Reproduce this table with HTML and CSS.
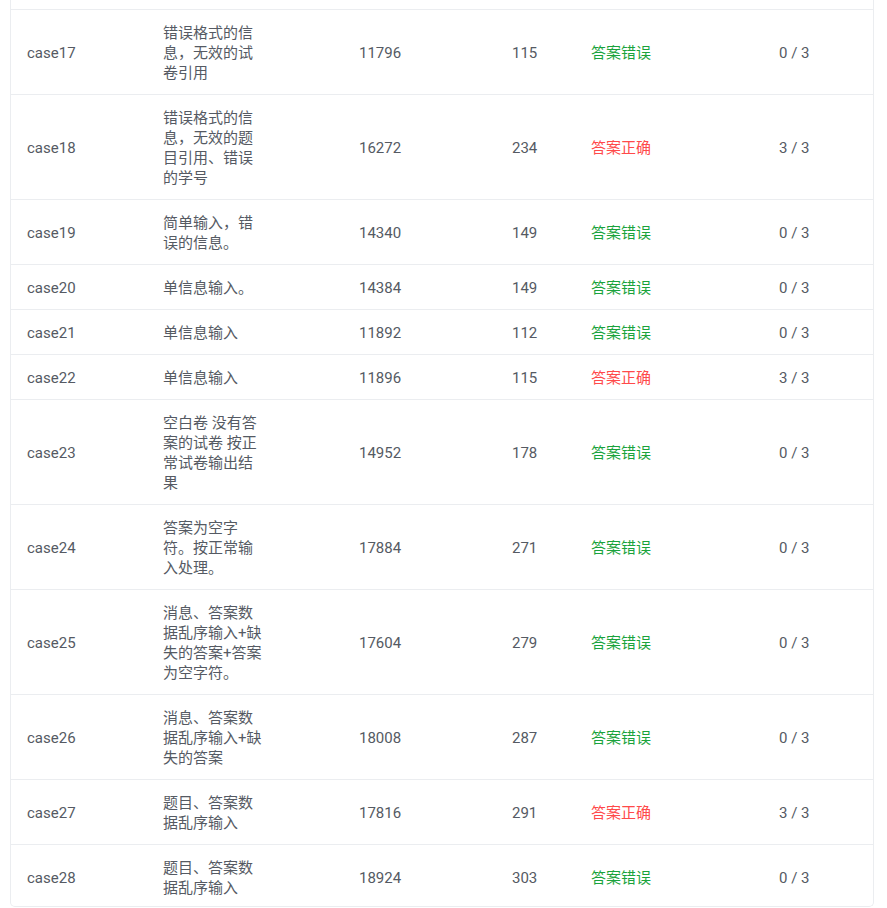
FILE: index.html
```html
<!DOCTYPE html>
<html lang="zh-CN">
<head>
<meta charset="utf-8">
<title>测试点</title>
<link rel="stylesheet" href="styles.css">
</head>
<body>
<div class="panel">
  <table class="cases">
    <colgroup>
      <col class="c-name"><col class="c-desc"><col class="c-mem"><col class="c-time"><col class="c-res"><col class="c-score">
    </colgroup>
    <tbody>
      <tr><td>case17</td><td><div class="desc">错误格式的信息，无效的试卷引用</div></td><td>11796</td><td>115</td><td class="bad">答案错误</td><td>0 / 3</td></tr>
      <tr><td>case18</td><td><div class="desc">错误格式的信息，无效的题目引用、错误的学号</div></td><td>16272</td><td>234</td><td class="ok">答案正确</td><td>3 / 3</td></tr>
      <tr><td>case19</td><td><div class="desc">简单输入，错误的信息。</div></td><td>14340</td><td>149</td><td class="bad">答案错误</td><td>0 / 3</td></tr>
      <tr><td>case20</td><td><div class="desc">单信息输入。</div></td><td>14384</td><td>149</td><td class="bad">答案错误</td><td>0 / 3</td></tr>
      <tr><td>case21</td><td><div class="desc">单信息输入</div></td><td>11892</td><td>112</td><td class="bad">答案错误</td><td>0 / 3</td></tr>
      <tr><td>case22</td><td><div class="desc">单信息输入</div></td><td>11896</td><td>115</td><td class="ok">答案正确</td><td>3 / 3</td></tr>
      <tr><td>case23</td><td><div class="desc">空白卷 没有答案的试卷 按正常试卷输出结果</div></td><td>14952</td><td>178</td><td class="bad">答案错误</td><td>0 / 3</td></tr>
      <tr><td>case24</td><td><div class="desc">答案为空字符。按正常输入处理。</div></td><td>17884</td><td>271</td><td class="bad">答案错误</td><td>0 / 3</td></tr>
      <tr><td>case25</td><td><div class="desc">消息、答案数据乱序输入+缺失的答案+答案为空字符。</div></td><td>17604</td><td>279</td><td class="bad">答案错误</td><td>0 / 3</td></tr>
      <tr><td>case26</td><td><div class="desc">消息、答案数据乱序输入+缺失的答案</div></td><td>18008</td><td>287</td><td class="bad">答案错误</td><td>0 / 3</td></tr>
      <tr><td>case27</td><td><div class="desc">题目、答案数据乱序输入</div></td><td>17816</td><td>291</td><td class="ok">答案正确</td><td>3 / 3</td></tr>
      <tr class="last"><td>case28</td><td><div class="desc">题目、答案数据乱序输入</div></td><td>18924</td><td>303</td><td class="bad">答案错误</td><td>0 / 3</td></tr>
    </tbody>
  </table>
</div>
</body>
</html>
```
FILE: styles.css
```css
html, body {
  margin: 0;
  padding: 0;
  background: #ffffff;
}
body {
  font-family: Roboto, "Noto Sans CJK SC", sans-serif;
  font-size: 15px;
  line-height: 20px;
  color: #555a63;
}
.panel {
  width: 862px;
  margin-left: 10px;
  padding-top: 9px;
  border-left: 1px solid #ebedf0;
  border-right: 1px solid #ebedf0;
  border-bottom: 1px solid #ebedf0;
  border-radius: 0 0 5px 5px;
  overflow: hidden;
}
.cases {
  width: 862px;
  border-collapse: collapse;
  table-layout: fixed;
}
.c-name { width: 136px; }
.c-desc { width: 196px; }
.c-mem { width: 153px; }
.c-time { width: 79px; }
.c-res { width: 188px; }
.c-score { width: 110px; }
.cases td {
  padding: 13px 0 11px 16px;
  border-top: 1px solid #ebedf0;
  vertical-align: middle;
  text-align: left;
}
.cases .last td {
  padding-bottom: 8px;
}
.desc {
  width: 100px;
  word-break: break-all;
}
.bad { color: #1aa33c; }
.ok { color: #ff4a4a; }
```
